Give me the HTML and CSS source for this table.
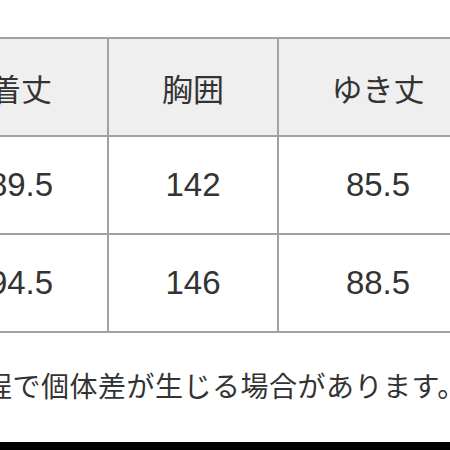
FILE: index.html
```html
<!DOCTYPE html>
<html lang="ja">
<head>
<meta charset="utf-8">
<link rel="stylesheet" href="styles.css">
</head>
<body>
<div class="page">
  <table class="size-table">
    <colgroup>
      <col class="c1"><col class="c2"><col class="c3">
    </colgroup>
    <tr class="head">
      <th>着丈</th><th>胸囲</th><th>ゆき丈</th>
    </tr>
    <tr>
      <td>89.5</td><td>142</td><td>85.5</td>
    </tr>
    <tr>
      <td>94.5</td><td>146</td><td>88.5</td>
    </tr>
  </table>
  <p class="note">程で個体差が生じる場合があります。</p>
</div>
<div class="bar"></div>
</body>
</html>
```
FILE: styles.css
```css
html, body {
  margin: 0;
  padding: 0;
  background: #fff;
  overflow: hidden;
  width: 450px;
  height: 450px;
}
body {
  font-family: "Liberation Sans", "Noto Sans CJK JP", sans-serif;
  color: #333;
}
.page {
  margin-left: -67px;
  width: 560px;
  padding-top: 37px;
}
.size-table {
  border-collapse: collapse;
  table-layout: fixed;
}
.c1 { width: 174px; }
.c2 { width: 170px; }
.c3 { width: 200px; }
.size-table th,
.size-table td {
  border: 2px solid #a2a2a2;
  height: 96px;
  padding: 0;
  text-align: center;
  vertical-align: middle;
  font-weight: normal;
}
.size-table th {
  background: #efefef;
  font-size: 31px;
}
.size-table td {
  font-size: 33px;
}
.note {
  margin: 35px 0 0 51px;
  font-size: 28px;
  letter-spacing: 0.5px;
  line-height: 40px;
  white-space: nowrap;
}
.bar {
  position: absolute;
  left: 0;
  top: 442px;
  width: 450px;
  height: 8px;
  background: #000;
}
```
